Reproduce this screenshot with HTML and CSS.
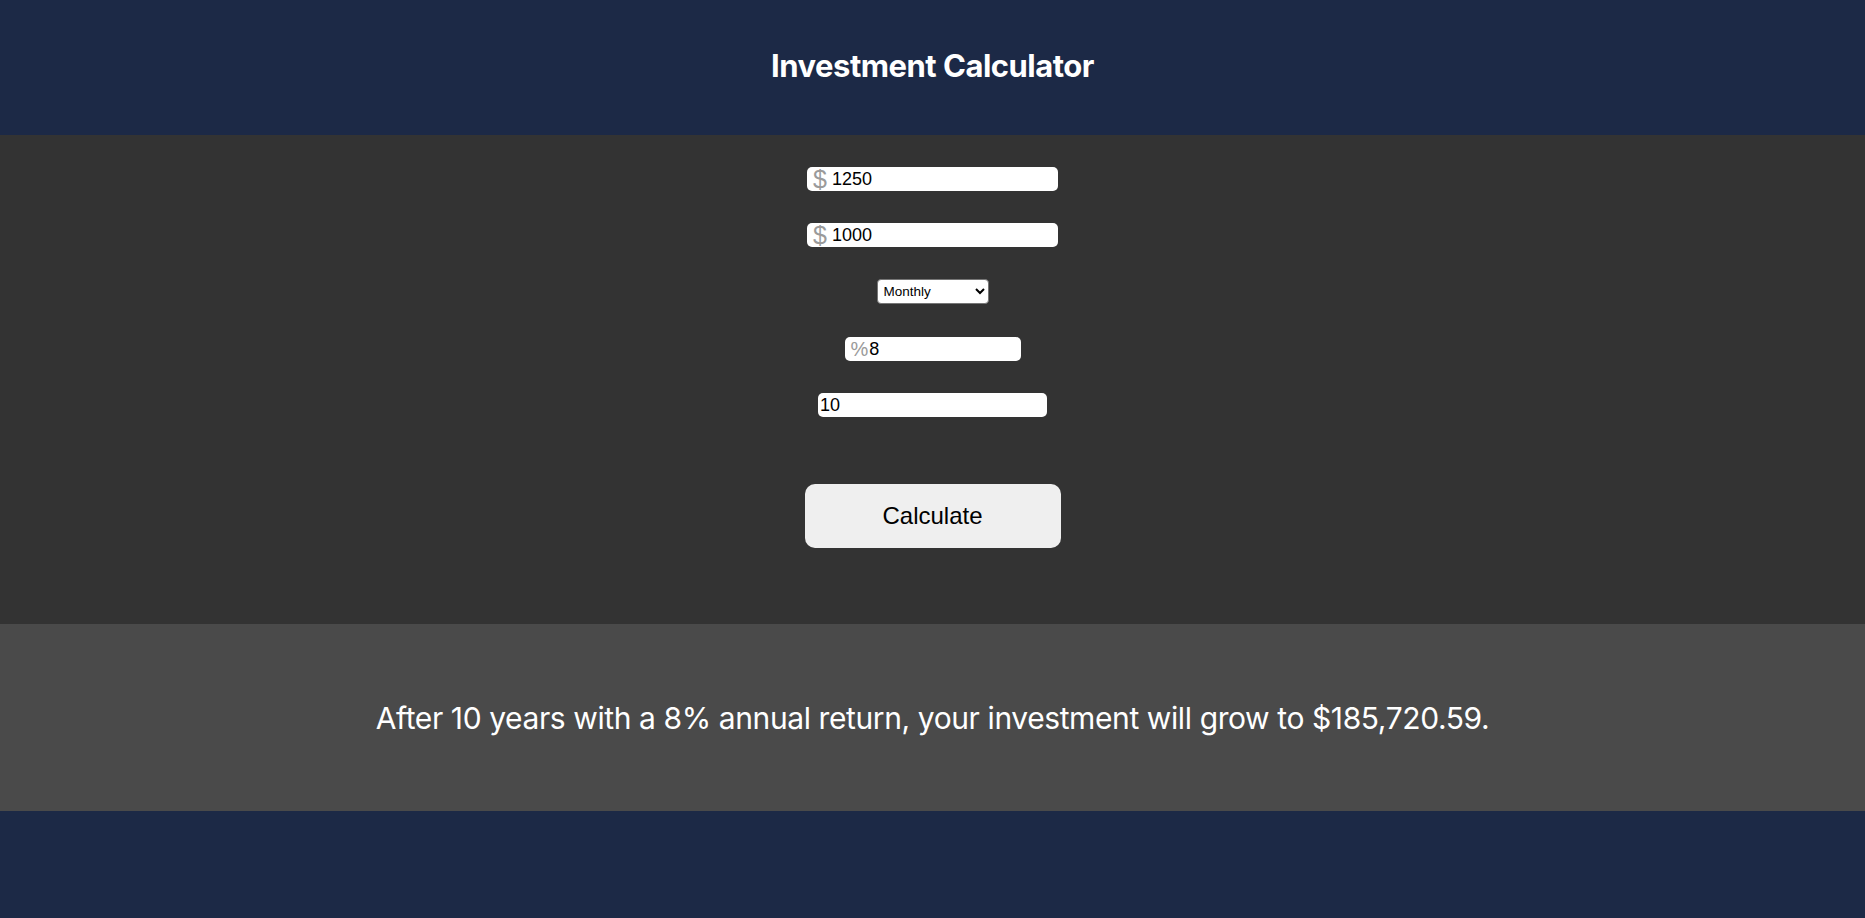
FILE: index.html
```html
<!DOCTYPE html>
<html lang="en">
<head>
<meta charset="utf-8">
<title>Investment Calculator</title>
<link rel="stylesheet" href="styles.css">
</head>
<body>
<header class="header">
  <h1 class="title">Investment Calculator</h1>
</header>
<main class="calc">
  <div class="field field-money">
    <span class="prefix">$</span>
    <input class="input" type="text" value="1250">
  </div>
  <div class="field field-money">
    <span class="prefix">$</span>
    <input class="input" type="text" value="1000">
  </div>
  <div class="row">
    <select class="select">
      <option>Monthly</option>
      <option>Yearly</option>
    </select>
  </div>
  <div class="field field-pct">
    <span class="prefix prefix-pct">%</span>
    <input class="input" type="text" value="8">
  </div>
  <div class="field field-years">
    <input class="input" type="text" value="10">
  </div>
  <button class="btn" type="button">Calculate</button>
</main>
<section class="result">
  <p class="result-text">After 10 years with a 8% annual return, your investment will grow to $185,720.59.</p>
</section>
<footer class="footer"></footer>
</body>
</html>
```
FILE: styles.css
```css
* { box-sizing: border-box; }
html, body { margin: 0; padding: 0; }
body {
  background: #1c2946;
  font-family: "Liberation Sans", Arial, sans-serif;
  min-height: 918px;
}
.header {
  height: 135px;
  background: #1c2946;
  display: flex;
  align-items: center;
  justify-content: center;
}
.title {
  margin: 0 0 4px;
  color: #fff;
  font-family: Inter, "Noto Sans", sans-serif;
  font-weight: 700;
  font-size: 31px;
  letter-spacing: -0.5px;
}
.calc {
  background: #333333;
  height: 489px;
  padding-top: 32px;
  display: flex;
  flex-direction: column;
  align-items: center;
}
.field {
  height: 24px;
  background: #fff;
  border-radius: 5px;
  display: flex;
  align-items: center;
  margin-bottom: 32px;
}
.field-money { width: 251px; padding-left: 6px; }
.field-pct { width: 176px; padding-left: 6px; }
.field-years { width: 229px; padding-left: 2px; }
.prefix {
  color: #9a9a9a;
  font-size: 25px;
  line-height: 24px;
  margin-right: 5px;
}
.prefix-pct {
  font-size: 20px;
  margin-right: 1px;
}
.input {
  border: none;
  outline: none;
  background: transparent;
  font-family: "Liberation Sans", Arial, sans-serif;
  font-size: 18px;
  color: #000;
  padding: 0;
  width: 100%;
  height: 24px;
}
.row {
  height: 25px;
  margin-bottom: 33px;
}
.select {
  width: 112px;
  height: 25px;
  font-family: "Liberation Sans", Arial, sans-serif;
  font-size: 13.5px;
  background: #fff;
  border: 1px solid #767676;
  border-radius: 4px;
  color: #000;
  padding: 0 2px;
}
.btn {
  margin-top: 35px;
  width: 256px;
  height: 64px;
  background: #efefef;
  border: none;
  border-radius: 10px;
  font-family: "Liberation Sans", Arial, sans-serif;
  font-size: 24px;
  color: #000;
}
.result {
  background: #4a4a4a;
  height: 187px;
  display: flex;
  align-items: center;
  justify-content: center;
}
.result-text {
  margin: 0;
  color: #fff;
  font-family: Inter, "Noto Sans", sans-serif;
  font-size: 30px;
  letter-spacing: -0.4px;
  font-weight: 400;
}
.footer {
  height: 107px;
  background: #1c2946;
}
```
